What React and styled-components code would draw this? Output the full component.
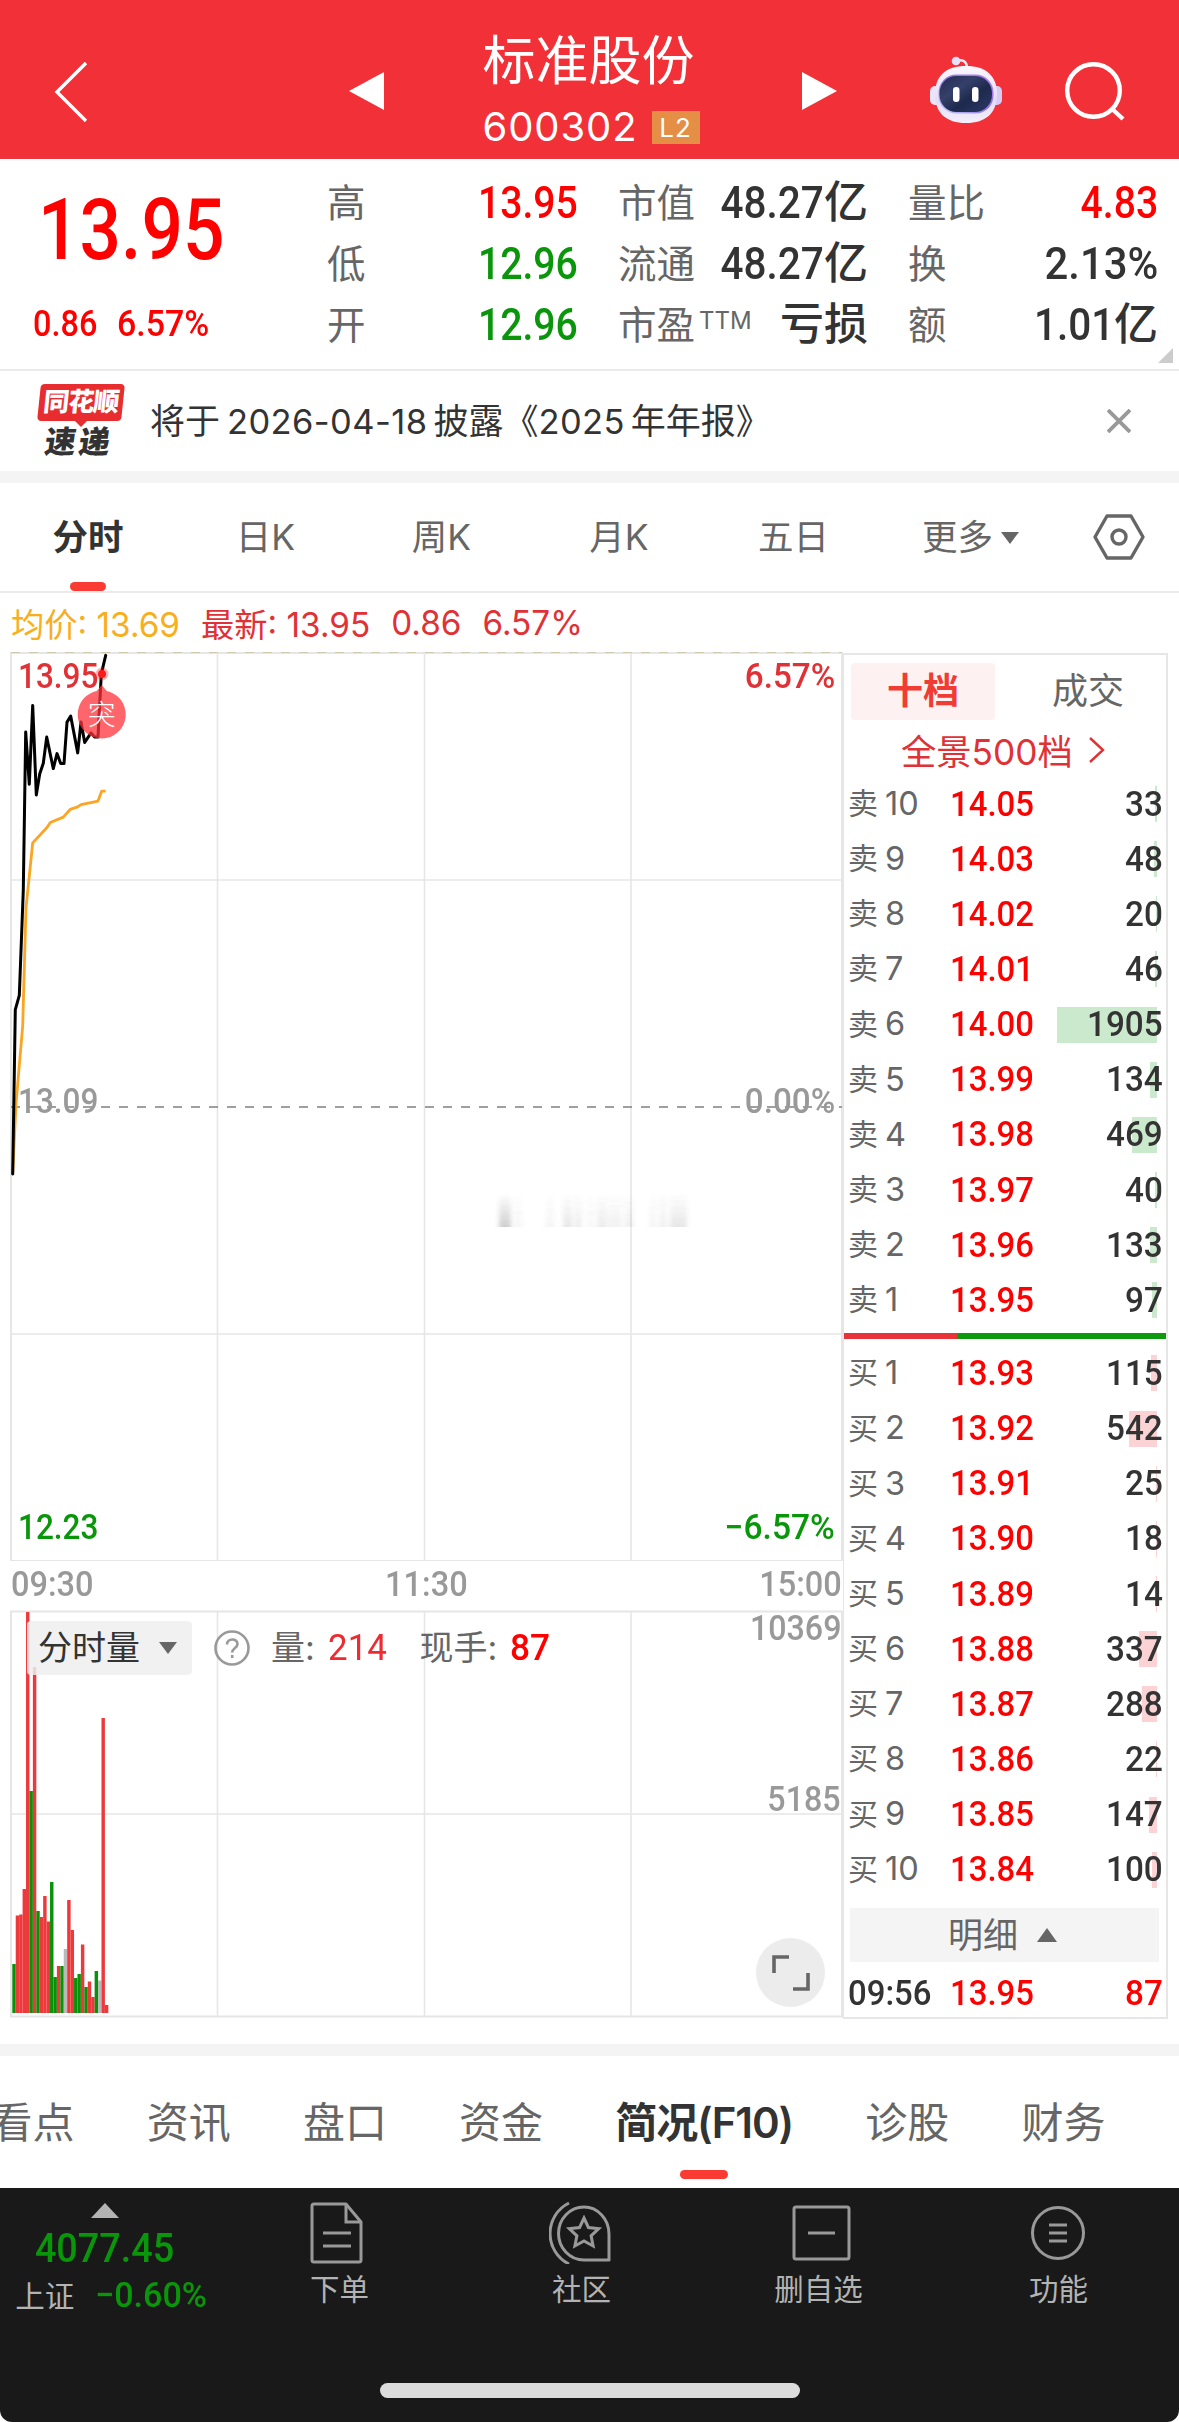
import React from "react";
import styled, { createGlobalStyle } from "styled-components";

const GlobalStyle = createGlobalStyle`
    * { box-sizing: border-box; }
    body {
        margin: 0;
        background: #fff;
        font-family: Inter, "Noto Sans CJK SC", sans-serif;
        color: #333;
    }
    svg { display: block; }
`

const Page = styled.div`
    width: 1179px;
    height: 2422px;
    overflow: hidden;
    display: flex;
    flex-direction: column;
    background: #fff;
`

// narrow digits for prices and volumes
const Din = styled.span`
    display: inline-block;
    font-family: Roboto, "Noto Sans CJK SC", sans-serif;
    font-weight: ${({ weight }) => weight || 500};
    font-size: ${({ size }) => size}px;
    line-height: 1;
    white-space: pre;
    color: ${({ color }) => color || "inherit"};
    transform: scaleX(${({ fit }) => fit || 0.88});
    transform-origin: ${({ from }) => from || "left"} center;
`

const Header = styled.header`
    height: 159px;
    flex: none;
    background: #f23037;
    border-bottom: 2px solid #e33a42;
    display: grid;
    grid-template-columns: 349px 488px 92px 133px 1fr;
    color: #fff;
`

const HeaderCell = styled.div`
    display: flex;
    padding-top: ${({ top }) => top}px;
    padding-left: ${({ left }) => left || 0}px;
`

const TitleArea = styled.div`
    display: flex;
    justify-content: space-between;
`

const TitleBox = styled.div`
    display: flex;
    flex-direction: column;
    align-items: flex-start;
    padding-top: 30px;
    width: 221px;
`

const StockName = styled.div`
    font-size: 53px;
    line-height: 62px;
    white-space: nowrap;
`

const CodeLine = styled.div`
    display: flex;
    align-items: center;
    gap: 14px;
    margin-top: 13px;
    font-size: 40px;
    line-height: 44px;
    letter-spacing: 0.9px;
`

const LevelBadge = styled.span`
    width: 48px;
    height: 33px;
    background: #e58e46;
    font-size: 26px;
    line-height: 33px;
    text-align: center;
`

const Quote = styled.section`
    height: 212px;
    flex: none;
    border-bottom: 2px solid #ebebeb;
    display: grid;
    grid-template-columns: 287px 251px 250px 250px;
    column-gap: 40px;
    position: relative;
`

const PriceBox = styled.div`
    padding: 28px 0 0 38px;
    display: flex;
    flex-direction: column;
`

const PriceChange = styled.div`
    display: flex;
    gap: 12px;
    margin: 33px 0 0 -5px;
`

const QuoteColumn = styled.div`
    padding-top: 13px;
`

const QuoteRow = styled.div`
    height: 61px;
    display: flex;
    align-items: center;
    justify-content: space-between;
`

const QuoteLabel = styled.span`
    font-size: 38.5px;
    line-height: 61px;
    color: #666;
    white-space: nowrap;
    padding-top: 2px;
    sup {
        font-size: 24px;
        line-height: 1;
        vertical-align: 10px;
        margin-left: 4px;
    }
`

const QuoteValue = styled.span`
    display: flex;
    align-items: center;
    font-size: 44px;
    font-weight: 500;
    line-height: 61px;
    color: ${({ color }) => color || "#333"};
`

const Corner = styled.span`
    position: absolute;
    right: 6px;
    bottom: 6px;
    border-left: 15px solid transparent;
    border-bottom: 15px solid #ccc;
`

const Notice = styled.section`
    height: 100px;
    flex: none;
    display: flex;
    align-items: center;
    padding: 0 48px 0 36px;
`

const Brand = styled.div`
    width: 90px;
    height: 76px;
    margin-right: 24px;
    display: flex;
    flex-direction: column;
    align-items: center;
    font-weight: 900;
`

const BrandTop = styled.div`
    width: 84px;
    height: 37px;
    margin-top: 1px;
    background: #e82d30;
    border-radius: 4px;
    transform: skewX(-6deg);
    color: #fff;
    font-size: 26px;
    line-height: 36px;
    text-align: center;
    letter-spacing: -1px;
`

const BrandTip = styled.div`
    border: 6px solid transparent;
    border-top-color: #e82d30;
    border-bottom: 0;
`

const BrandBottom = styled.div`
    font-size: 31px;
    line-height: 30px;
    letter-spacing: 3px;
    margin-right: 4px;
    transform: skewX(-8deg);
`

const NoticeText = styled.div`
    flex: 1;
    font-size: 35px;
    line-height: 50px;
    white-space: nowrap;
`

const DateText = styled.span`
    font-size: 34.5px;
    letter-spacing: 0.4px;
    margin: 0 6px 0 ${({ left }) => left || 0}px;
`

const Gap = styled.div`
    height: 12px;
    flex: none;
    background: #f4f4f4;
`

const PeriodTabs = styled.nav`
    height: 110px;
    flex: none;
    border-bottom: 2px solid #ebebeb;
    display: grid;
    grid-template-columns: 176px 179px 173px 182px 167px 182px 1fr;
`

const PeriodTab = styled.div`
    display: flex;
    flex-direction: column;
    align-items: center;
    font-size: 35.5px;
    line-height: 50px;
    padding-top: ${({ top }) => top || 30}px;
    height: 108px;
    color: ${({ active }) => (active ? "#333" : "#666")};
    font-weight: ${({ active }) => (active ? 700 : 400)};
`

const TabText = styled.div`
    display: flex;
    align-items: center;
    gap: 8px;
    white-space: nowrap;
    margin-left: ${({ shift }) => shift || 0}px;
`

const Underline = styled.span`
    width: ${({ width }) => width}px;
    height: 9px;
    margin-top: auto;
    border-radius: 5px;
    background: #fa3b33;
`

const Arrow = styled.span`
    border: ${({ size }) => size}px solid transparent;
    border-${({ up }) => (up ? "bottom" : "top")}: ${({ tall }) => tall}px solid ${({ color }) => color || "#666"};
    border-${({ up }) => (up ? "top" : "bottom")}: 0;
`

const Summary = styled.div`
    height: 59px;
    flex: none;
    display: flex;
    align-items: center;
    gap: 21px;
    padding: 0 0 0 11px;
    font-size: 33.3px;
    color: #e03236;
    white-space: pre;
`

const Average = styled.span`
    color: #f9ae1c;
`

const Market = styled.section`
    height: 1392px;
    flex: none;
    display: flex;
`

const Charts = styled.div`
    width: 843px;
    display: flex;
    flex-direction: column;
`

const PriceChart = styled.div`
    height: 909px;
    position: relative;
`

const VolumeChart = styled.div`
    height: 410px;
    position: relative;
`

const Axis = styled.div`
    height: 49px;
    padding: 0 1px 2px 11px;
    display: grid;
    grid-template-columns: 1fr 1fr 1fr;
    align-items: center;
    color: #999;
    span:nth-child(2) { justify-self: center; }
    span:nth-child(3) { justify-self: end; }
`

const ChartLabel = styled.div`
    position: absolute;
    top: ${({ top }) => top}px;
    ${({ right }) => (right !== undefined ? `right: ${right}px;` : "left: 18px;")}
    color: ${({ color }) => color || "#999"};
    line-height: 1;
    display: flex;
`

const VolumeBar = styled.div`
    position: absolute;
    left: 27px;
    top: 11px;
    display: flex;
    align-items: center;
    font-size: 34px;
    line-height: 50px;
    color: #666;
    white-space: pre;
`

const IndicatorPick = styled.div`
    width: 165px;
    height: 54px;
    border-radius: 4px;
    background: rgba(238, 238, 238, 0.85);
    display: flex;
    align-items: center;
    gap: 19px;
    padding-left: 11px;
    color: #333;
    margin-right: 22px;
`

const VolumeInfo = styled.span`
    display: flex;
    align-items: center;
    gap: 13px;
    margin-left: ${({ left }) => left}px;
`

const Expand = styled.div`
    position: absolute;
    left: 756px;
    top: 328px;
    width: 69px;
    height: 69px;
    border-radius: 50%;
    background: #ececec;
    display: flex;
    align-items: center;
    justify-content: center;
`

const Book = styled.aside`
    width: 325px;
    height: 1366px;
    margin-top: 1px;
    border: 2px solid #e6e6e6;
    border-left-width: 1px;
    display: flex;
    flex-direction: column;
`

const BookTabs = styled.div`
    display: grid;
    grid-template-columns: 144px 1fr;
    padding: 8px 5px 0 7px;
`

const BookTab = styled.div`
    height: 57px;
    line-height: 56px;
    text-align: center;
    font-size: 36px;
    border-radius: 4px;
    color: ${({ active }) => (active ? "#f03c35" : "#666")};
    background: ${({ active }) => (active ? "#fef1f1" : "none")};
    font-weight: ${({ active }) => (active ? 700 : 400)};
    padding-left: ${({ active }) => (active ? 0 : 20)}px;
`

const FullDepth = styled.div`
    display: flex;
    align-items: center;
    gap: 16px;
    height: 57px;
    padding: 2px 0 0 57px;
    font-size: 35.3px;
    color: #e03236;
    white-space: nowrap;
`

const Levels = styled.div`
    padding: ${({ top }) => top}px 0 0;
`

const Level = styled.div`
    height: 55.15px;
    display: grid;
    grid-template-columns: 37px 65px 1fr;
    align-items: center;
    padding: 0 3px 1px 4px;
    font-size: 30px;
    color: #666;
    position: relative;
    > * { z-index: 1; }
`

const LevelSide = styled.span`
    line-height: 48px;
    padding-bottom: 2px;
`

const LevelNo = styled.span`
    font-size: 32.5px;
    line-height: 1;
`

const LevelNumbers = styled.div`
    display: flex;
    align-items: center;
    justify-content: space-between;
    line-height: 1;
`

const DepthBar = styled.span`
    position: absolute;
    right: 9px;
    top: 9px;
    height: 36px;
    z-index: 0;
    background: ${({ side }) => (side === "卖" ? "#cbeacd" : "#fbd3d5")};
`

const Ratio = styled.div`
    height: 6px;
    margin-top: 5px;
    display: grid;
    grid-template-columns: 113px 1fr;
`

const RatioPart = styled.span`
    background: ${({ color }) => color};
`

const DetailButton = styled.div`
    margin: 10px 7px 0 6px;
    height: 54px;
    padding: 0 4px 0 0;
    background: #f4f4f4;
    color: #666;
    font-size: 35px;
    line-height: 50px;
    display: flex;
    align-items: center;
    justify-content: center;
    gap: 19px;
`

const Trade = styled.div`
    flex: 1;
    display: grid;
    grid-template-columns: 102px 1fr auto;
    align-items: center;
    padding: 9px 3px 0 4px;
`

const InfoTabs = styled.nav`
    height: 132px;
    flex: none;
    display: flex;
    gap: 72.2px;
    margin-left: -9.5px;
    font-size: 42px;
`

const InfoTab = styled.div`
    display: flex;
    flex-direction: column;
    align-items: center;
    height: 123px;
    padding-top: 37px;
    line-height: 60px;
    white-space: nowrap;
    color: ${({ active }) => (active ? "#333" : "#666")};
    font-weight: ${({ active }) => (active ? 600 : 400)};
    letter-spacing: ${({ active }) => (active ? -1.1 : 0)}px;
`

const BottomArea = styled.footer`
    flex: 1;
    background: #191919;
    border-radius: 0 0 12px 12px;
    display: flex;
    flex-direction: column;
`

const BottomBar = styled.div`
    height: 195px;
    display: grid;
    grid-template-columns: 210px 259px 225px 249px 231px;
    color: #b3b3b3;
    font-size: 29.5px;
`

const IndexBox = styled.div`
    display: flex;
    flex-direction: column;
    align-items: center;
    padding-top: 15px;
`

const IndexPrice = styled.div`
    display: flex;
    margin-top: 9px;
`

const IndexChange = styled.div`
    display: flex;
    align-items: center;
    gap: 21px;
    line-height: 40px;
    margin-top: 7px;
    padding-left: 17px;
    white-space: nowrap;
`

const Action = styled.div`
    display: flex;
    flex-direction: column;
    align-items: center;
    padding-top: 12px;
    line-height: 40px;
`

const ActionIcon = styled.span`
    margin: 0 0 5px ${({ shift }) => shift}px;
`

const HomeBar = styled.div`
    width: 420px;
    height: 15px;
    border-radius: 8px;
    background: #dcdcdc;
    margin: 0 auto;
`

const RED = "#fe0000"
const GREEN = "#0a960a"

const quotes = [
    [
        { label: "高", num: "13.95", color: RED },
        { label: "低", num: "12.96", color: GREEN },
        { label: "开", num: "12.96", color: GREEN },
    ],
    [
        { label: "市值", num: "48.27", unit: "亿" },
        { label: "流通", num: "48.27", unit: "亿" },
        { label: "市盈", sup: "TTM", unit: "亏损" },
    ],
    [
        { label: "量比", num: "4.83", color: RED },
        { label: "换", num: "2.13%" },
        { label: "额", num: "1.01", unit: "亿" },
    ],
]

const sells = [
    [10, "14.05", 33],
    [9, "14.03", 48],
    [8, "14.02", 20],
    [7, "14.01", 46],
    [6, "14.00", 1905],
    [5, "13.99", 134],
    [4, "13.98", 469],
    [3, "13.97", 40],
    [2, "13.96", 133],
    [1, "13.95", 97],
]

const buys = [
    [1, "13.93", 115],
    [2, "13.92", 542],
    [3, "13.91", 25],
    [4, "13.90", 18],
    [5, "13.89", 14],
    [6, "13.88", 337],
    [7, "13.87", 288],
    [8, "13.86", 22],
    [9, "13.85", 147],
    [10, "13.84", 100],
]

const priceLine = "12.7,522 15.3,357.6 19.3,343.4 23.3,238 25.7,80.1 29.3,132.3 32.7,53.4 36.3,143 39.7,121.9 43.3,111.2 46.7,85.1 53.3,116.6 57,101.6 60.7,111.6 64,111.6 67,70.1 70.7,64.1 77.7,100.9 81,70.1 84.7,90.5 91,80.9 94.7,85.1 98,85.1 101.3,21.9 105.7,3.4"
const averageLine = "12.7,522 16,452 22.7,373.7 26,255.9 32.7,190.9 47,175.5 50.3,170.5 63.3,165.1 70.3,157.3 77.7,154.8 81,152.6 98,149.1 101.7,139.1 105.7,139.1"

// [side, height]
const volumes = [
    ["g", 49], ["r", 97.5], ["r", 98.5], ["r", 124], ["r", 401], ["g", 222], ["r", 346],
    ["g", 102], ["r", 96], ["r", 117], ["r", 91.5], ["g", 131], ["g", 36], ["r", 47],
    ["g", 47], ["n", 64], ["r", 113], ["r", 83], ["g", 35], ["g", 39], ["r", 68.5],
    ["g", 26], ["r", 31.5], ["r", 16], ["g", 42], ["n", 32.5], ["r", 295], ["r", 8],
]
const volumeColors = { r: "#ee393c", g: "#0a910a", n: "#b9b9b9" }

const smudges = [
    [499, 12, 0.28], [514, 8, 0.05], [546, 8, 0.06], [563, 9, 0.14], [574, 8, 0.1],
    [588, 6, 0.05], [597, 10, 0.11], [608, 14, 0.08], [625, 8, 0.1], [650, 6, 0.07],
    [659, 8, 0.09], [670, 17, 0.14],
]

const BackIcon = () => (
    <svg width="34" height="62" viewBox="0 0 34 62" fill="none" stroke="#fff" strokeWidth="3.4">
        <path d="M32 2 3 31l29 29" />
    </svg>
)

const SideArrow = ({ flip }) => (
    <svg width="35" height="38" viewBox="0 0 35 38" fill="#fff">
        <path d={flip ? "M0 0v38l35-19z" : "M35 0v38L0 19z"} />
    </svg>
)

const RobotIcon = () => (
    <svg width="74" height="70" viewBox="0 0 74 70">
        <defs>
            <linearGradient id="shell" x1="0" y1="0" x2="0" y2="1">
                <stop offset="0" stopColor="#fbf8fd" />
                <stop offset="0.6" stopColor="#e4dcf7" />
                <stop offset="1" stopColor="#f3effb" />
            </linearGradient>
            <linearGradient id="face" x1="0" y1="0" x2="1" y2="1">
                <stop offset="0" stopColor="#232c50" />
                <stop offset="0.35" stopColor="#35406a" />
                <stop offset="0.6" stopColor="#1d2a4d" />
                <stop offset="1" stopColor="#2c3866" />
            </linearGradient>
            <linearGradient id="rim" x1="0" y1="1" x2="1" y2="0">
                <stop offset="0" stopColor="#b9c3f5" />
                <stop offset="0.5" stopColor="#6f52d8" />
                <stop offset="1" stopColor="#a35be6" />
            </linearGradient>
        </defs>
        <path d="M27 5c7-2 11 0 11 8" fill="none" stroke="#f6e9f2" strokeWidth="2.6" />
        <circle cx="27" cy="5" r="4.3" fill="#e7e0f8" />
        <rect x="1" y="30" width="12" height="19" rx="5" fill="#e9e4f8" />
        <rect x="61" y="30" width="12" height="19" rx="5" fill="#d5cbf3" />
        <path d="M37 10c20 0 31 10 31 28 0 19-11 29-31 29S6 57 6 38C6 20 17 10 37 10z" fill="url(#shell)" />
        <rect x="9.5" y="18.5" width="55" height="39" rx="18" fill="url(#rim)" opacity="0.75" />
        <rect x="10.5" y="20" width="52.5" height="36" rx="17" fill="url(#face)" />
        <rect x="24" y="31" width="6.5" height="15" rx="3.2" fill="#fff" />
        <rect x="43" y="31" width="6.5" height="15" rx="3.2" fill="#fff" />
    </svg>
)

const SearchIcon = () => (
    <svg width="64" height="64" viewBox="0 0 64 64" fill="none" stroke="#fff" strokeWidth="4.4">
        <circle cx="31.5" cy="31.5" r="26.3" />
        <path d="m49 49 12 11" />
    </svg>
)

const CloseIcon = () => (
    <svg width="24" height="24" viewBox="0 0 24 24" stroke="#999" strokeWidth="3.8">
        <path d="m1 1 22 22M23 1 1 23" />
    </svg>
)

const HexIcon = () => (
    <svg width="52" height="46" viewBox="0 0 52 46" fill="none" stroke="#666" strokeWidth="3.4">
        <path d="M14 2h24l12 21-12 21H14L2 23z" strokeLinejoin="round" />
        <circle cx="26" cy="23" r="7" />
    </svg>
)

const HelpIcon = () => (
    <svg width="36" height="36" viewBox="0 0 36 36" fill="none" stroke="#999" strokeWidth="2.6">
        <circle cx="18" cy="18" r="16.5" />
        <path d="M13 14.5c0-6.500 10.500-6.500 10.500-.5 0 4-5.300 4-5.300 8.500" />
        <path d="M18.200 25v3" />
    </svg>
)

const DocIcon = () => (
    <svg width="56" height="64" viewBox="0 0 56 64" fill="none" stroke="#999" strokeWidth="3">
        <path d="M5 4h32l15 18v38a2 2 0 0 1-2 2H5a2 2 0 0 1-2-2V6a2 2 0 0 1 2-2z" strokeLinejoin="round" />
        <path d="M37 4v18h15M14 33h28M14 46h28" />
    </svg>
)

const CommunityIcon = () => (
    <svg width="62" height="64" viewBox="0 0 62 64" fill="none" stroke="#999" strokeWidth="3">
        <path d="M20 3A34 34 0 0 0 20 64" />
        <path d="M35 7a25 26 0 0 0 0 53h25V34A25 27 0 0 0 35 7z" strokeLinejoin="round" />
        <path d="m35 18 4.400 9.500 10.300 1.200-7.600 7.100 2 10.200-9.100-5-9.100 5 2-10.200-7.600-7.100 10.300-1.200z" />
    </svg>
)

const RemoveIcon = () => (
    <svg width="60" height="64" viewBox="0 0 60 64" fill="none" stroke="#999" strokeWidth="3">
        <rect x="2" y="7" width="55" height="52" rx="2" />
        <path d="M16 33h27" />
    </svg>
)

const MenuIcon = () => (
    <svg width="56" height="64" viewBox="0 0 56 64" fill="none" stroke="#999" strokeWidth="3">
        <circle cx="28" cy="33" r="25.5" />
        <path d="M19 25h18M19 33h18M19 41h18" />
    </svg>
)

const PriceGraph = () => (
    <svg width="843" height="909" viewBox="0 0 843 909" fill="none">
        <defs>
            <linearGradient id="smudge" x1="0" y1="0" x2="0" y2="1">
                <stop offset="0" stopColor="#555" stopOpacity="0" />
                <stop offset="0.6" stopColor="#555" stopOpacity="0.6" />
                <stop offset="1" stopColor="#555" />
            </linearGradient>
            <filter id="soften"><feGaussianBlur stdDeviation="2 0.5" /></filter>
        </defs>
        <g stroke="#e6e6e6" strokeWidth="1.6">
            <path d="M11 1h831v908H11z" strokeWidth="2" />
            <path d="M11 228h831M11 682h831M217.500 1v908M424.500 1v908M631 1v908" />
        </g>
        <path d="M11 .5h831" stroke="#d3c9b0" strokeDasharray="9 9" />
        <path d="M11 455h831" stroke="#808080" strokeWidth="1.7" strokeDasharray="9 9" />
        <g filter="url(#soften)">
            {smudges.map(([x, w, o]) => (
                <rect key={x} x={x} y="542" width={w} height="33" fill="url(#smudge)" opacity={o} />
            ))}
        </g>
        <polyline points={averageLine} stroke="#fca523" strokeWidth="2.8" strokeLinejoin="round" />
        <polyline points={priceLine} stroke="#000" strokeWidth="3" strokeLinejoin="round" strokeLinecap="round" />
        <circle cx="102" cy="22" r="6.5" fill="#ff2828" opacity="0.35" />
        <circle cx="102" cy="22" r="4" fill="#fb1a1e" />
        <path d="m101.700 33 5 6a24 24 0 1 1-10 0z" fill="#ff3339" opacity="0.75" />
        <text x="101.7" y="73" fontSize="28" fontWeight="300" textAnchor="middle" fill="#fff" fontFamily="Noto Sans CJK SC">突</text>
    </svg>
)

const VolumeGraph = () => (
    <svg width="843" height="410" viewBox="0 0 843 410" fill="none">
        <g stroke="#e6e6e6" strokeWidth="1.6">
            <path d="M11 1.500h831v405H11z" strokeWidth="2" />
            <path d="M11 204h831M217.500 1v406M424.500 1v406M631 1v406" />
        </g>
        {volumes.map(([side, h], i) => (
            <rect key={i} x={12.3 + i * 3.43} y={403 - h} width="3.43" height={h} fill={volumeColors[side]} />
        ))}
    </svg>
)

const BookLevel = ({ side, row: [no, price, volume] }) => (
    <Level>
        <LevelSide>{side}</LevelSide>
        <LevelNo>{no}</LevelNo>
        <LevelNumbers>
            <Din size={35} fit={0.94} color={RED}>{price}</Din>
            <Din size={35} fit={0.95} color="#333" from="right">{volume}</Din>
        </LevelNumbers>
        <DepthBar side={side} style={{ width: Math.max(1, Math.round(volume / 19.05)) }} />
    </Level>
)

const App = () => (
    <>
        <GlobalStyle />
        <Page>
            <Header>
                <HeaderCell top={61} left={54}><BackIcon /></HeaderCell>
                <TitleArea>
                    <HeaderCell top={72}><SideArrow /></HeaderCell>
                    <TitleBox>
                        <StockName>标准股份</StockName>
                        <CodeLine>600302<LevelBadge>L2</LevelBadge></CodeLine>
                    </TitleBox>
                    <HeaderCell top={72}><SideArrow flip /></HeaderCell>
                </TitleArea>
                <div />
                <HeaderCell top={56}><RobotIcon /></HeaderCell>
                <HeaderCell top={59}><SearchIcon /></HeaderCell>
            </Header>

            <Quote>
                <PriceBox>
                    <Din size={86} fit={0.85} color={RED}>13.95</Din>
                    <PriceChange>
                        <Din size={36.5} fit={0.89} color={RED}>0.86</Din>
                        <Din size={36.5} fit={0.93} color={RED}>6.57%</Din>
                    </PriceChange>
                </PriceBox>
                {quotes.map((rows, i) => (
                    <QuoteColumn key={i}>
                        {rows.map(({ label, sup, num, unit, color }) => (
                            <QuoteRow key={label}>
                                <QuoteLabel>{label}{sup && <sup>{sup}</sup>}</QuoteLabel>
                                <QuoteValue color={color}>
                                    {num && <Din size={45} fit={num.includes("%") ? 0.93 : unit ? 0.9 : 0.87} from="right">{num}</Din>}
                                    {unit}
                                </QuoteValue>
                            </QuoteRow>
                        ))}
                    </QuoteColumn>
                ))}
                <Corner />
            </Quote>

            <Notice>
                <Brand>
                    <BrandTop>同花顺</BrandTop>
                    <BrandTip />
                    <BrandBottom>速递</BrandBottom>
                </Brand>
                <NoticeText>
                    将于<DateText left={7}>2026-04-18</DateText>披露《<DateText>2025</DateText>年年报》
                </NoticeText>
                <CloseIcon />
            </Notice>
            <Gap />

            <PeriodTabs>
                <PeriodTab active><TabText>分时</TabText><Underline width={36} /></PeriodTab>
                <PeriodTab>日K</PeriodTab>
                <PeriodTab>周K</PeriodTab>
                <PeriodTab>月K</PeriodTab>
                <PeriodTab>五日</PeriodTab>
                <PeriodTab><TabText shift={5}>更多<Arrow size={9} tall={12} /></TabText></PeriodTab>
                <PeriodTab top={31}><TabText shift={-1}><HexIcon /></TabText></PeriodTab>
            </PeriodTabs>

            <Summary>
                <Average>均价: 13.69</Average>
                <span>最新: 13.95</span>
                <span>0.86</span>
                <span>6.57%</span>
            </Summary>

            <Market>
                <Charts>
                    <PriceChart>
                        <PriceGraph />
                        <ChartLabel top={7} color="#e03236"><Din size={35} fit={0.9}>13.95</Din></ChartLabel>
                        <ChartLabel top={7} right={8} color="#e03236"><Din size={35} fit={0.95} from="right">6.57%</Din></ChartLabel>
                        <ChartLabel top={432}><Din size={35} fit={0.9}>13.09</Din></ChartLabel>
                        <ChartLabel top={432} right={8}><Din size={35} fit={0.95} from="right">0.00%</Din></ChartLabel>
                        <ChartLabel top={858} color={GREEN}><Din size={35} fit={0.9}>12.23</Din></ChartLabel>
                        <ChartLabel top={858} right={8} color={GREEN}><Din size={35} fit={0.96} from="right">−6.57%</Din></ChartLabel>
                    </PriceChart>
                    <Axis>
                        <Din size={35} fit={0.93}>09:30</Din>
                        <Din size={35} fit={0.93} from="center">11:30</Din>
                        <Din size={35} fit={0.93} from="right">15:00</Din>
                    </Axis>
                    <VolumeChart>
                        <VolumeGraph />
                        <VolumeBar>
                            <IndicatorPick>分时量<Arrow size={9} tall={12} /></IndicatorPick>
                            <HelpIcon />
                            <VolumeInfo left={21}>量:<Din size={36} fit={0.97} weight={400} color="#ee2b30">214</Din></VolumeInfo>
                            <VolumeInfo left={31}>现手:<Din size={36} fit={0.98} color={RED}>87</Din></VolumeInfo>
                        </VolumeBar>
                        <ChartLabel top={1} right={2}><Din size={35} fit={0.92} from="right">10369</Din></ChartLabel>
                        <ChartLabel top={172} right={2}><Din size={35} fit={0.92} from="right">5185</Din></ChartLabel>
                        <Expand>
                            <svg width="38" height="38" viewBox="0 0 38 38" fill="none" stroke="#666" strokeWidth="3.6">
                                <path d="M2 19V3h15M36 19v16H21" />
                            </svg>
                        </Expand>
                    </VolumeChart>
                </Charts>

                <Book>
                    <BookTabs>
                        <BookTab active>十档</BookTab>
                        <BookTab>成交</BookTab>
                    </BookTabs>
                    <FullDepth>
                        全景500档
                        <svg width="16" height="28" viewBox="0 0 16 28" fill="none" stroke="#e03236" strokeWidth="2.4">
                            <path d="m1 2 13 12L1 26" />
                        </svg>
                    </FullDepth>
                    <Levels top={0}>
                        {sells.map((row) => <BookLevel key={row[0]} side="卖" row={row} />)}
                    </Levels>
                    <Ratio>
                        <RatioPart color="#e83338" />
                        <RatioPart color="#0e990e" />
                    </Ratio>
                    <Levels top={7}>
                        {buys.map((row) => <BookLevel key={row[0]} side="买" row={row} />)}
                    </Levels>
                    <DetailButton>明细<Arrow up size={10} tall={14} /></DetailButton>
                    <Trade>
                        <Din size={35} fit={0.94}>09:56</Din>
                        <Din size={35} fit={0.94} color={RED}>13.95</Din>
                        <Din size={35} fit={0.95} color={RED} from="right">87</Din>
                    </Trade>
                </Book>
            </Market>
            <Gap />

            <InfoTabs>
                <InfoTab>看点</InfoTab>
                <InfoTab>资讯</InfoTab>
                <InfoTab>盘口</InfoTab>
                <InfoTab>资金</InfoTab>
                <InfoTab active>简况(F10)<Underline width={48} /></InfoTab>
                <InfoTab>诊股</InfoTab>
                <InfoTab>财务</InfoTab>
            </InfoTabs>

            <BottomArea>
                <BottomBar>
                    <IndexBox>
                        <Arrow up size={14} tall={15} color="#b3b3b3" />
                        <IndexPrice>
                            <Din size={41.5} fit={0.91} color={GREEN} from="center">4077.45</Din>
                        </IndexPrice>
                        <IndexChange>
                            上证
                            <Din size={35.5} fit={0.96} color={GREEN}>−0.60%</Din>
                        </IndexChange>
                    </IndexBox>
                    <Action><ActionIcon shift={-5}><DocIcon /></ActionIcon>下单</Action>
                    <Action><ActionIcon shift={-4}><CommunityIcon /></ActionIcon>社区</Action>
                    <Action><ActionIcon shift={7}><RemoveIcon /></ActionIcon>删自选</Action>
                    <Action><ActionIcon shift={-1}><MenuIcon /></ActionIcon>功能</Action>
                </BottomBar>
                <HomeBar />
            </BottomArea>
        </Page>
    </>
)

export default App
